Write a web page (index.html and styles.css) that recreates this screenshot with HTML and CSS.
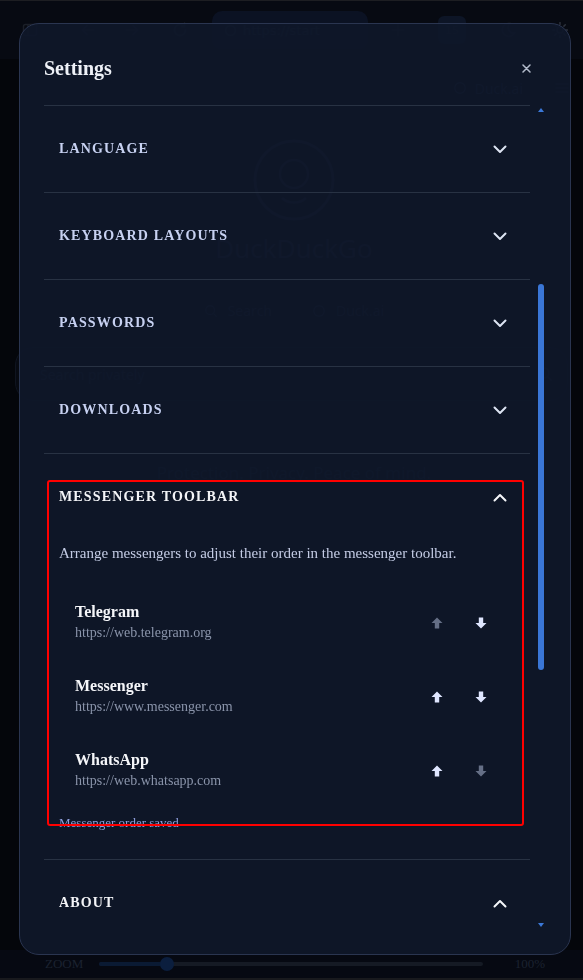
FILE: index.html
```html
<!DOCTYPE html>
<html lang="en">
<head>
<meta charset="utf-8">
<title>Settings</title>
<link rel="stylesheet" href="styles.css">
</head>
<body>
<div class="app">
  <header class="toolbar">
    <svg class="tb-icon" viewBox="0 0 16 16"><rect x="1.5" y="2.5" width="13" height="11" rx="2" fill="none" stroke="currentColor" stroke-width="1.5"/><path d="M6 3v10" stroke="currentColor" stroke-width="1.5"/></svg>
    <svg class="tb-icon back" viewBox="0 0 16 16"><path d="M14 8H2.5M7 3.5 2.5 8 7 12.5" fill="none" stroke="currentColor" stroke-width="1.6" stroke-linecap="round" stroke-linejoin="round"/></svg>
    <svg class="tb-icon fwd" viewBox="0 0 16 16"><path d="M2 8h11.5M9 3.5 13.5 8 9 12.5" fill="none" stroke="currentColor" stroke-width="1.6" stroke-linecap="round" stroke-linejoin="round"/></svg>
    <svg class="tb-icon reload" viewBox="0 0 16 16"><path d="M13.5 8A5.5 5.5 0 1 1 11.8 4M12.5 1.5v3h-3" fill="none" stroke="currentColor" stroke-width="1.8" stroke-linecap="round" stroke-linejoin="round"/></svg>
    <div class="urlbar">
      <svg class="url-icon" viewBox="0 0 16 16"><circle cx="8" cy="8" r="6" fill="none" stroke="currentColor" stroke-width="1.5"/></svg>
      <span>https://start</span>
    </div>
    <svg class="tb-icon plus" viewBox="0 0 16 16"><path d="M8 2v12M2 8h12" stroke="currentColor" stroke-width="1.6" stroke-linecap="round"/></svg>
    <div class="tabcount">15</div>
    <svg class="tb-icon moon" viewBox="0 0 16 16"><path d="M10 1.5A6.5 6.5 0 1 0 14.5 11 5.5 5.5 0 0 1 10 1.5z" fill="none" stroke="currentColor" stroke-width="1.5"/></svg>
    <svg class="tb-icon sun" viewBox="0 0 16 16"><circle cx="8" cy="8" r="3" fill="none" stroke="currentColor" stroke-width="1.5"/><path d="M8 .5v2M8 13.5v2M.5 8h2M13.5 8h2M2.7 2.7l1.4 1.4M11.9 11.9l1.4 1.4M2.7 13.3l1.4-1.4M11.9 4.1l1.4-1.4" stroke="currentColor" stroke-width="1.5" stroke-linecap="round"/></svg>
  </header>

  <main class="home">
    <div class="subbar">
      <span class="duckai-pill">
        <svg viewBox="0 0 16 16"><circle cx="8" cy="8" r="6" fill="none" stroke="currentColor" stroke-width="1.5"/></svg>
        Duck.ai
      </span>
      <svg class="menu" viewBox="0 0 16 16"><path d="M2 4h12M2 8h12M2 12h12" stroke="currentColor" stroke-width="1.5" stroke-linecap="round"/></svg>
    </div>
    <div class="logo">
      <svg viewBox="0 0 84 84"><circle cx="42" cy="42" r="39" fill="none" stroke="currentColor" stroke-width="3"/><circle cx="42" cy="36" r="14" fill="none" stroke="currentColor" stroke-width="2.5"/><path d="M30 60c6 6 18 6 24 0" fill="none" stroke="currentColor" stroke-width="2.5"/></svg>
    </div>
    <div class="brand">DuckDuckGo</div>
    <div class="modes">
      <span class="mode"><svg viewBox="0 0 16 16"><circle cx="7" cy="7" r="5" fill="none" stroke="currentColor" stroke-width="1.5"/><path d="M11 11l3.5 3.5" stroke="currentColor" stroke-width="1.5"/></svg>Search</span>
      <span class="mode"><svg viewBox="0 0 16 16"><circle cx="8" cy="8" r="6" fill="none" stroke="currentColor" stroke-width="1.5"/></svg>Duck.ai</span>
    </div>
    <div class="searchbox">
      <span>Search privately</span>
      <svg viewBox="0 0 16 16"><circle cx="7" cy="7" r="5" fill="none" stroke="currentColor" stroke-width="1.5"/><path d="M11 11l3.5 3.5" stroke="currentColor" stroke-width="1.5"/></svg>
    </div>
    <p class="tagline">Protection. Privacy. Peace of mind.</p>
  </main>

  <footer class="zoombar">
    <span class="zoom-label">ZOOM</span>
    <div class="slider">
      <div class="slider-fill"></div>
      <div class="slider-knob"></div>
    </div>
    <span class="zoom-value">100%</span>
  </footer>
</div>

<div class="backdrop">
  <div class="modal" role="dialog" aria-label="Settings">
    <div class="modal-head">
      <h2 class="modal-title">Settings</h2>
      <button class="close" aria-label="Close">
        <svg viewBox="0 0 9 9" width="9" height="9"><path d="M1 1l7 7M8 1 1 8" stroke="currentColor" stroke-width="1.5" stroke-linecap="round"/></svg>
      </button>
    </div>

    <div class="modal-body">
      <div class="sections">
        <section class="sec">
          <div class="sec-head">
            <span class="sec-title">Language</span>
            <svg class="chev" viewBox="0 0 14 9"><path d="M1.5 1.5 7 7l5.5-5.5" fill="none" stroke="currentColor" stroke-width="2" stroke-linecap="round" stroke-linejoin="round"/></svg>
          </div>
        </section>
        <section class="sec">
          <div class="sec-head">
            <span class="sec-title">Keyboard Layouts</span>
            <svg class="chev" viewBox="0 0 14 9"><path d="M1.5 1.5 7 7l5.5-5.5" fill="none" stroke="currentColor" stroke-width="2" stroke-linecap="round" stroke-linejoin="round"/></svg>
          </div>
        </section>
        <section class="sec">
          <div class="sec-head">
            <span class="sec-title">Passwords</span>
            <svg class="chev" viewBox="0 0 14 9"><path d="M1.5 1.5 7 7l5.5-5.5" fill="none" stroke="currentColor" stroke-width="2" stroke-linecap="round" stroke-linejoin="round"/></svg>
          </div>
        </section>
        <section class="sec">
          <div class="sec-head">
            <span class="sec-title">Downloads</span>
            <svg class="chev" viewBox="0 0 14 9"><path d="M1.5 1.5 7 7l5.5-5.5" fill="none" stroke="currentColor" stroke-width="2" stroke-linecap="round" stroke-linejoin="round"/></svg>
          </div>
        </section>

        <section class="sec open messenger">
          <div class="sec-head">
            <span class="sec-title">Messenger Toolbar</span>
            <svg class="chev" viewBox="0 0 14 9"><path d="M1.5 7.5 7 2l5.5 5.5" fill="none" stroke="currentColor" stroke-width="2" stroke-linecap="round" stroke-linejoin="round"/></svg>
          </div>
          <div class="sec-body">
            <p class="desc">Arrange messengers to adjust their order in the messenger toolbar.</p>
            <ul class="mlist">
              <li class="mitem">
                <div class="minfo">
                  <div class="mname">Telegram</div>
                  <div class="murl">https://web.telegram.org</div>
                </div>
                <div class="mbtns">
                  <button class="move disabled" aria-label="Move up"><svg viewBox="0 0 12 12"><path d="M6 .5 11.5 6H8.2v5.5H3.8V6H.5z" fill="currentColor"/></svg></button>
                  <button class="move" aria-label="Move down"><svg viewBox="0 0 12 12"><path d="M6 11.5 11.5 6H8.2V.5H3.8V6H.5z" fill="currentColor"/></svg></button>
                </div>
              </li>
              <li class="mitem">
                <div class="minfo">
                  <div class="mname">Messenger</div>
                  <div class="murl">https://www.messenger.com</div>
                </div>
                <div class="mbtns">
                  <button class="move" aria-label="Move up"><svg viewBox="0 0 12 12"><path d="M6 .5 11.5 6H8.2v5.5H3.8V6H.5z" fill="currentColor"/></svg></button>
                  <button class="move" aria-label="Move down"><svg viewBox="0 0 12 12"><path d="M6 11.5 11.5 6H8.2V.5H3.8V6H.5z" fill="currentColor"/></svg></button>
                </div>
              </li>
              <li class="mitem">
                <div class="minfo">
                  <div class="mname">WhatsApp</div>
                  <div class="murl">https://web.whatsapp.com</div>
                </div>
                <div class="mbtns">
                  <button class="move" aria-label="Move up"><svg viewBox="0 0 12 12"><path d="M6 .5 11.5 6H8.2v5.5H3.8V6H.5z" fill="currentColor"/></svg></button>
                  <button class="move disabled" aria-label="Move down"><svg viewBox="0 0 12 12"><path d="M6 11.5 11.5 6H8.2V.5H3.8V6H.5z" fill="currentColor"/></svg></button>
                </div>
              </li>
            </ul>
            <p class="status">Messenger order saved</p>
          </div>
          <div class="highlight"></div>
        </section>

        <section class="sec open">
          <div class="sec-head">
            <span class="sec-title">About</span>
            <svg class="chev" viewBox="0 0 14 9"><path d="M1.5 7.5 7 2l5.5 5.5" fill="none" stroke="currentColor" stroke-width="2" stroke-linecap="round" stroke-linejoin="round"/></svg>
          </div>
        </section>
      </div>

      <div class="scrollbar">
        <span class="sb-up"></span>
        <span class="sb-thumb"></span>
        <span class="sb-down"></span>
      </div>
    </div>
  </div>
</div>
</body>
</html>
```

FILE: styles.css
```css
* { box-sizing: border-box; }

html, body {
  margin: 0;
  padding: 0;
}

body {
  width: 583px;
  height: 980px;
  overflow: hidden;
  background: #04060b;
  font-family: "Liberation Serif", "Times New Roman", serif;
  color: #e5e7eb;
}

/* ---------- background browser page ---------- */
.app {
  display: flex;
  flex-direction: column;
  height: 980px;
  border-top: 1px solid #1d1e22;
  border-bottom: 2px solid #18191d;
}

.toolbar {
  flex: none;
  height: 58px;
  display: flex;
  align-items: center;
  padding-left: 22px;
  background: #070a12;
}

.tb-icon {
  flex: none;
  width: 16px;
  height: 16px;
  color: #1b1f28;
}
.tb-icon.back { margin-left: 42px; }
.tb-icon.fwd { margin-left: 28px; }
.tb-icon.reload { margin-left: 32px; color: #23272f; }
.tb-icon.plus { margin-left: 22px; }
.tb-icon.moon { margin-left: 34px; color: #20242d; }
.tb-icon.sun { margin-left: 36px; color: #2c313b; }

.urlbar {
  flex: none;
  margin-left: 24px;
  width: 156px;
  height: 38px;
  border-radius: 10px;
  background: #0b1223;
  display: flex;
  align-items: center;
  gap: 6px;
  padding-left: 12px;
  font-family: "DejaVu Sans", sans-serif;
  font-size: 13px;
  color: #26304a;
}
.url-icon { width: 13px; height: 13px; }

.tabcount {
  flex: none;
  margin-left: 32px;
  width: 28px;
  height: 28px;
  border-radius: 6px;
  background: #0d1526;
  display: flex;
  align-items: center;
  justify-content: center;
  font-family: "DejaVu Sans", sans-serif;
  font-size: 11px;
  color: #232c42;
}

.home {
  flex: 1;
  display: flex;
  flex-direction: column;
  align-items: center;
  padding-left: 5px;
  font-family: "Noto Sans", "DejaVu Sans", sans-serif;
}

.subbar {
  align-self: stretch;
  margin-top: 19px;
  height: 20px;
  display: flex;
  align-items: center;
  justify-content: flex-end;
  gap: 31px;
  padding-right: 13px;
  color: #2b3756;
  font-size: 14px;
}
.duckai-pill {
  display: flex;
  align-items: center;
  gap: 8px;
}
.duckai-pill svg { width: 14px; height: 14px; }
.menu { width: 16px; height: 16px; color: #1f283b; }

.logo {
  margin-top: 40px;
  width: 84px;
  height: 84px;
  color: #27324a;
}
.logo svg { width: 84px; height: 84px; display: block; }

.brand {
  margin-top: 14px;
  font-size: 26px;
  line-height: 24px;
  color: #29344c;
}

.modes {
  margin-top: 41px;
  display: flex;
  gap: 40px;
  font-size: 14px;
  line-height: 20px;
  color: #29344c;
}
.mode {
  display: flex;
  align-items: center;
  gap: 10px;
}
.mode svg { width: 14px; height: 14px; }

.searchbox {
  margin-top: 26px;
  margin-left: -5px;
  width: 553px;
  height: 54px;
  border-radius: 18px;
  border: 1px solid #0f1420;
  background: #070a12;
  display: flex;
  align-items: center;
  justify-content: space-between;
  padding: 0 14px 0 24px;
  font-size: 14px;
  color: #252e44;
}
.searchbox svg { width: 16px; height: 16px; }

.tagline {
  margin: 60px 0 0;
  font-size: 17px;
  line-height: 24px;
  color: #222c42;
}

.zoombar {
  flex: none;
  height: 28px;
  display: flex;
  align-items: center;
  padding: 0 38px 0 45px;
  background: #060912;
  font-size: 13px;
  color: #1b2230;
}
.slider {
  position: relative;
  margin-left: 16px;
  width: 384px;
  height: 4px;
  border-radius: 2px;
  background: #151a24;
}
.slider-fill {
  width: 68px;
  height: 4px;
  border-radius: 2px;
  background: #0a1a33;
}
.slider-knob {
  position: absolute;
  left: 61px;
  top: -5px;
  width: 14px;
  height: 14px;
  border-radius: 50%;
  background: #0b1e3e;
}
.zoom-value { margin-left: auto; }

/* ---------- modal ---------- */
.backdrop {
  position: fixed;
  inset: 0;
  padding: 23px 0 0 19px;
}

.modal {
  width: 552px;
  height: 932px;
  display: flex;
  flex-direction: column;
  padding: 0 24px 19px;
  border: 1px solid #2a3550;
  border-radius: 20px;
  background: rgba(15, 23, 41, 0.95);
}

.modal-head {
  flex: none;
  display: flex;
  align-items: center;
  justify-content: space-between;
  padding: 24px 0 17px;
}
.modal-title {
  margin: 0;
  font-size: 20px;
  font-weight: bold;
  line-height: 40px;
  color: #eef1f7;
}
.close {
  width: 40px;
  height: 40px;
  padding: 0;
  border: 0;
  background: none;
  display: flex;
  align-items: center;
  justify-content: center;
  color: #b3bbcb;
}
.close svg { width: 9px; height: 9px; display: block; }

.modal-body {
  flex: none;
  height: 830px;
  display: flex;
  overflow: hidden;
}

.sections {
  flex: none;
  width: 486px;
}

.sec {
  position: relative;
  border-top: 1px solid #283243;
}

.sec-head {
  height: 86px;
  display: flex;
  align-items: center;
  justify-content: space-between;
  padding: 0 23px 0 15px;
}
.sec-title {
  font-size: 14px;
  font-weight: bold;
  letter-spacing: 1.15px;
  text-transform: uppercase;
  line-height: 18px;
  color: #c7d1f1;
}
.sec.open .sec-title { color: #f3f4f7; }

.chev {
  flex: none;
  width: 14px;
  height: 9px;
  color: #dde4f3;
}
.sec.open .chev { color: #f5f6fa; }

.sec-body {
  padding: 3px 15px 28px;
}

.desc {
  margin: 0;
  font-size: 15px;
  line-height: 20px;
  color: #c3cbe4;
}

.mlist {
  margin: 27px 0 0;
  padding: 0;
  list-style: none;
  display: flex;
  flex-direction: column;
  gap: 8px;
}

.mitem {
  display: flex;
  align-items: center;
  justify-content: space-between;
  padding: 12px 16px;
}

.mname {
  font-size: 16px;
  font-weight: bold;
  line-height: 20px;
  color: #f5f6f9;
}
.murl {
  font-size: 14px;
  line-height: 22px;
  color: #8a94aa;
}

.mbtns {
  display: flex;
  gap: 8px;
}
.move {
  width: 36px;
  height: 36px;
  padding: 0;
  border: 0;
  background: none;
  display: flex;
  align-items: center;
  justify-content: center;
  color: #dfe6ff;
}
.move svg { width: 12px; height: 12px; display: block; }
.move.disabled { color: #656f86; }

.status {
  margin: 11px 0 0;
  font-size: 13px;
  line-height: 16px;
  color: #8e9edb;
}

.highlight {
  position: absolute;
  top: 26px;
  left: 3px;
  width: 477px;
  height: 346px;
  border: 2px solid #ff0000;
  border-radius: 3px;
  pointer-events: none;
}

/* fake scrollbar */
.scrollbar {
  flex: none;
  width: 16px;
  display: flex;
  flex-direction: column;
  align-items: flex-start;
  padding: 3px 0 8px 8px;
}
.sb-up {
  width: 0;
  height: 0;
  border-left: 3px solid transparent;
  border-right: 3px solid transparent;
  border-bottom: 4px solid #3b78d8;
}
.sb-thumb {
  margin-top: 172px;
  width: 6px;
  height: 386px;
  border-radius: 3px;
  background: #3a76d6;
}
.sb-down {
  margin-top: auto;
  width: 0;
  height: 0;
  border-left: 3px solid transparent;
  border-right: 3px solid transparent;
  border-top: 4px solid #3b78d8;
}
```
